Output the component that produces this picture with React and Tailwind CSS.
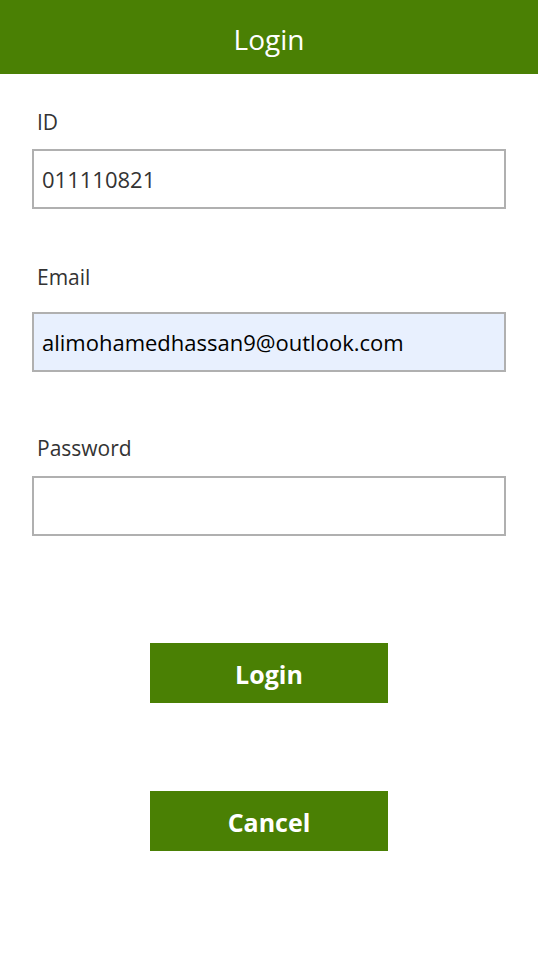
import React, { useState } from 'react';

export default function App() {
  const [id, setId] = useState('011110821');
  const [email, setEmail] = useState('alimohamedhassan9@outlook.com');
  const [password, setPassword] = useState('');

  const font = { fontFamily: '"Segoe UI", "Open Sans", "Noto Sans", sans-serif' };

  return (
    <div className="min-h-[960px] w-[538px] bg-white" style={font}>
      {/* Header */}
      <div className="h-[74px] bg-[#4a8004] flex items-center justify-center">
        <h1 className="mt-[4px] text-[28px] text-white leading-none">Login</h1>
      </div>

      {/* Form */}
      <div className="px-8 flex flex-col">
        <label className="mt-[34px] pl-[5px] text-[21px] leading-[28px] text-[#333]">ID</label>
        <input
          value={id}
          onChange={(e) => setId(e.target.value)}
          className="mt-[13px] h-[60px] w-[474px] border-2 border-[#b0b0b0] px-[8px] text-[22px] text-[#333] outline-none"
        />

        <label className="mt-[54px] pl-[5px] text-[21px] leading-[28px] text-[#333]">Email</label>
        <input
          value={email}
          onChange={(e) => setEmail(e.target.value)}
          className="mt-[21px] h-[60px] w-[474px] border-2 border-[#b0b0b0] bg-[#e8f0fe] px-[8px] text-[22px] text-black outline-none"
        />

        <label className="mt-[62px] pl-[5px] text-[21px] leading-[28px] text-[#333]">Password</label>
        <input
          type="password"
          value={password}
          onChange={(e) => setPassword(e.target.value)}
          className="mt-[14px] h-[60px] w-[474px] border-2 border-[#b0b0b0] px-[8px] text-[22px] text-[#333] outline-none"
        />
      </div>

      {/* Buttons */}
      <div className="flex flex-col items-center">
        <button className="mt-[107px] h-[60px] w-[238px] bg-[#4a8004] pt-[4px] text-white text-[25px] font-bold">
          Login
        </button>
        <button className="mt-[88px] h-[60px] w-[238px] bg-[#4a8004] pt-[4px] text-white text-[25px] font-bold">
          Cancel
        </button>
      </div>
    </div>
  );
}
